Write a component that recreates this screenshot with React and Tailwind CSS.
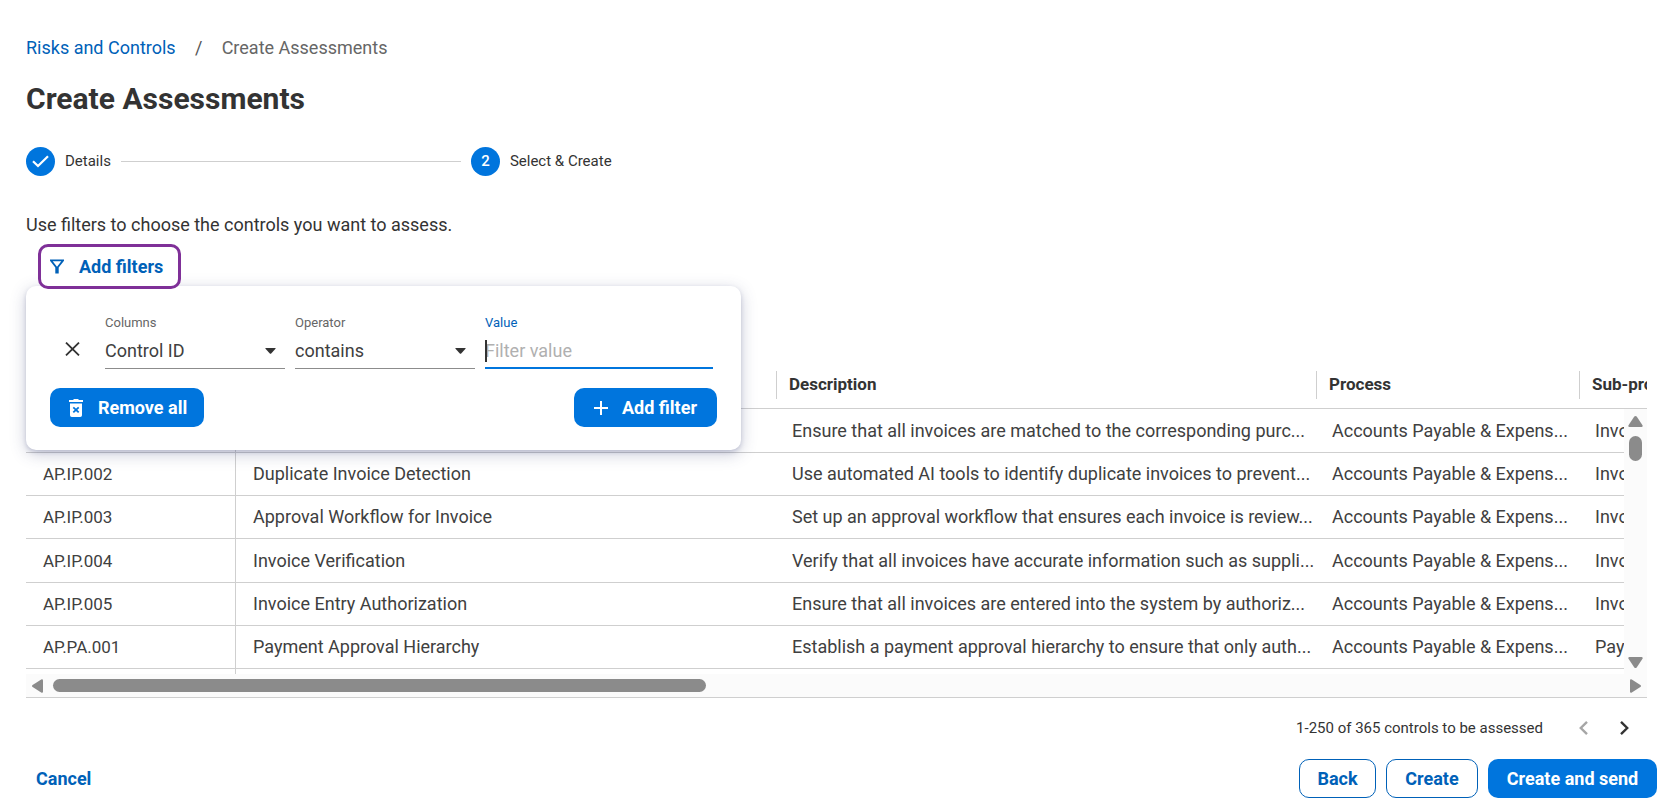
import React from "react";

const BLUE_BUTTON =
  "flex h-[39px] items-center rounded-[10px] bg-[#0075dd] text-[18px] font-bold text-white";
const OUTLINE_BUTTON =
  "h-[39px] rounded-[10px] border border-[#0061b8] bg-white text-[18px] font-bold text-[#0061b8]";

const HEADERS = ["Control ID", "Name", "Description", "Process", "Sub-process"];

const ROWS = [
  ["AP.IP.001", "Invoice Matching", "Ensure that all invoices are matched to the corresponding purc...", "Invoice Processing"],
  ["AP.IP.002", "Duplicate Invoice Detection", "Use automated AI tools to identify duplicate invoices to prevent...", "Invoice Processing"],
  ["AP.IP.003", "Approval Workflow for Invoice", "Set up an approval workflow that ensures each invoice is review...", "Invoice Processing"],
  ["AP.IP.004", "Invoice Verification", "Verify that all invoices have accurate information such as suppli...", "Invoice Processing"],
  ["AP.IP.005", "Invoice Entry Authorization", "Ensure that all invoices are entered into the system by authoriz...", "Invoice Processing"],
  ["AP.PA.001", "Payment Approval Hierarchy", "Establish a payment approval hierarchy to ensure that only auth...", "Payment Approval"],
];

function Breadcrumb() {
  return (
    <nav aria-label="Breadcrumb" className="flex h-6 items-center text-[18px]">
      <a href="#risks" className="text-[#0061b8]">Risks and Controls</a>
      <span className="w-[46px] text-center text-[#555]">/</span>
      <span className="text-[#666]">Create Assessments</span>
    </nav>
  );
}

function Stepper() {
  return (
    <ol className="mt-[30px] flex h-[29px] items-center gap-[10px] text-[15px]">
      <li className="flex items-center gap-[10px]">
        <span className="flex size-[29px] items-center justify-center rounded-full bg-[#0075dd]">
          <svg width="17" height="13" viewBox="0 0 17 13" fill="none" stroke="#fff" strokeWidth="2.2" aria-hidden="true">
            <path d="M1 6.2 6 11 16 1.2" />
          </svg>
        </span>
        Details
      </li>
      <li aria-hidden="true" className="h-px w-[340px] bg-[#cfcfcf]" />
      <li className="flex items-center gap-[10px]">
        <span className="flex size-[29px] items-center justify-center rounded-full bg-[#0075dd] font-medium text-white">
          2
        </span>
        Select &amp; Create
      </li>
    </ol>
  );
}

function SelectField({ id, label, value }) {
  return (
    <div className="w-[180px]">
      <label htmlFor={id} className="block h-5 text-[13px] leading-[22px] text-[#666]">{label}</label>
      <div className="relative">
        <select
          id={id}
          defaultValue={value}
          className="h-[37px] w-full appearance-none border-b border-[#8c8c8c] bg-transparent pt-px text-[18px] text-[#404040] outline-none"
        >
          <option>{value}</option>
        </select>
        <svg className="pointer-events-none absolute top-4 right-[9px]" width="11" height="6" viewBox="0 0 11 6" fill="#333" aria-hidden="true">
          <path d="M.8 0h9.4q.8.1.3.8L6.2 5.5q-.7.6-1.4 0L.5.8Q0 .1.8 0Z" />
        </svg>
      </div>
    </div>
  );
}

function FilterPanel() {
  return (
    <div className="absolute top-[42px] left-0 z-10 h-[164px] w-[715px] rounded-[10px] bg-white pt-[26px] pr-6 pl-6 shadow-[0_4px_16px_rgba(60,70,120,0.28),0_2px_4px_rgba(60,70,120,0.2)]">
      <div className="flex">
        <button type="button" aria-label="Remove filter" className="mt-[30px] ml-[15px] h-[14px] w-[40px]">
          <svg width="15" height="14" viewBox="0 0 15 14" fill="none" stroke="#333" strokeWidth="1.8" aria-hidden="true">
            <path d="m1 .6 13 12.8M14 .6 1 13.4" />
          </svg>
        </button>
        <div className="flex gap-[10px]">
          <SelectField id="columns" label="Columns" value="Control ID" />
          <SelectField id="operator" label="Operator" value="contains" />
          <div className="w-[228px]">
            <label htmlFor="value" className="block h-5 text-[13px] leading-[22px] text-[#0061b8]">Value</label>
            <div className="relative">
              <input
                id="value"
                type="text"
                placeholder="Filter value"
                className="h-[37px] w-full border-b-2 border-[#0075dd] bg-transparent pt-0.5 text-[18px] text-[#404040] outline-none placeholder:text-[#b0b0b0]"
              />
              <span className="absolute top-2 left-0 h-[22px] w-[2px] bg-[#333]" />
            </div>
          </div>
        </div>
      </div>
      <div className="mt-[19px] flex justify-between">
        <button type="button" className={BLUE_BUTTON + " w-[154px] pl-[19px]"}>
          <svg width="14" height="18" viewBox="0 0 14 18" aria-hidden="true">
            <path fill="#fff" d="M0 1h4l1-1h4l1 1h4v2H0ZM1 4.500h12V16.200q0 1.800-1.800 1.800H2.800Q1 18 1 16.200Z" />
            <path fill="none" stroke="#0075dd" strokeWidth="1.800" d="m4.300 8.400 5.400 5M9.700 8.400l-5.400 5" />
          </svg>
          <span className="ml-[15px]">Remove all</span>
        </button>
        <button type="button" className={BLUE_BUTTON + " w-[143px] pl-5"}>
          <svg width="14" height="14" viewBox="0 0 14 14" stroke="#fff" strokeWidth="2" aria-hidden="true">
            <path d="M7 0v14M0 7h14" />
          </svg>
          <span className="ml-[14px]">Add filter</span>
        </button>
      </div>
    </div>
  );
}

function ControlsTable() {
  return (
    <div className="mt-16 border-b border-[#cfcfcf]">
      <div className="relative overflow-hidden">
        <table className="w-full table-fixed border-separate border-spacing-0 text-left whitespace-nowrap">
          <colgroup>
            <col className="w-[210px]" />
            <col className="w-[540px]" />
            <col className="w-[540px]" />
            <col className="w-[263px]" />
            <col />
          </colgroup>
          <thead>
            <tr className="h-14">
              {HEADERS.map((name) => (
                <th key={name} scope="col" className="border-b border-[#cfcfcf] p-0 pt-2">
                  <div className="flex h-7 items-center border-l border-[#cfcfcf] pl-3 text-[17px] font-bold">
                    {name}
                  </div>
                </th>
              ))}
            </tr>
          </thead>
          <tbody className="text-[18px] leading-6 text-[#404040]">
            {ROWS.map(([id, name, description, sub]) => (
              <tr key={id} className="h-[43px] nth-[3n+1]:h-11">
                <td className="border-r border-b border-[#cfcfcf] py-0 pl-[17px] text-[17px]">{id}</td>
                <td className="border-b border-[#cfcfcf] py-0 pl-[17px]">{name}</td>
                <td className="border-b border-[#cfcfcf] py-0 pl-4">{description}</td>
                <td className="border-b border-[#cfcfcf] py-0 pl-4">Accounts Payable &amp; Expens...</td>
                <td className="border-b border-[#cfcfcf] py-0 pl-4">{sub}</td>
              </tr>
            ))}
            <tr className="h-[5px]" aria-hidden="true">
              <td className="border-r border-[#cfcfcf] p-0" />
              <td colSpan={4} className="p-0" />
            </tr>
          </tbody>
        </table>
        <div className="absolute top-14 right-0 bottom-0 flex w-[23px] flex-col items-center bg-[#fbfbfb] pt-[7px]">
          <svg width="15" height="11" viewBox="0 0 15 11" fill="#8b8b8b" aria-hidden="true">
            <path d="M6.300.6q1.200-1.200 2.400 0l5.800 8.600q.6 1.700-.9 1.800H1.400Q-.1 10.900.5 9.200Z" />
          </svg>
          <div className="mt-[9px] h-[25px] w-[13px] rounded-full bg-[#8b8b8b]" />
          <svg className="mt-auto mb-[6px]" width="15" height="11" viewBox="0 0 15 11" fill="#8b8b8b" aria-hidden="true">
            <path d="M6.300 10.400q1.200 1.200 2.400 0l5.800-8.600Q15.100.1 13.600 0H1.400Q-.1.1.5 1.800Z" />
          </svg>
        </div>
      </div>
      <div className="flex h-[23px] items-center bg-[#fbfbfb] pr-[6px] pl-[6px]">
        <svg width="11" height="14" viewBox="0 0 11 14" fill="#8b8b8b" aria-hidden="true">
          <path d="M.6 5.900q-1.200 1.100 0 2.200l8.600 5.500q1.700.6 1.800-.9V1.300Q10.900-.2 9.200.4Z" />
        </svg>
        <div className="mx-[10px] flex-1">
          <div className="h-[13px] w-[653px] rounded-full bg-[#8b8b8b]" />
        </div>
        <svg width="11" height="14" viewBox="0 0 11 14" fill="#8b8b8b" aria-hidden="true">
          <path d="M10.400 5.900q1.200 1.100 0 2.200l-8.600 5.500q-1.700.6-1.800-.9V1.300Q.1-.2 1.800.4Z" />
        </svg>
      </div>
    </div>
  );
}

export default function App() {
  return (
    <main className="bg-white pt-[35px] font-['Roboto',sans-serif] text-[#333]">
      <div className="pr-[19px] pl-[26px]">
        <Breadcrumb />
        <h1 className="mt-[22px] h-9 text-[30px] leading-9 font-bold">Create Assessments</h1>
        <Stepper />
        <p className="mt-[37px] h-6 text-[18px] leading-6">Use filters to choose the controls you want to assess.</p>
        <div className="relative mt-[7px]">
          <button
            type="button"
            className="relative z-20 ml-3 flex h-[45px] w-[143px] items-center rounded-[10px] border-[3px] border-[#7f3098] bg-white pl-[9px] text-[18px] font-bold text-[#0061b8]"
          >
            <svg width="14" height="15" viewBox="0 0 14 15" aria-hidden="true">
              <path fill="#0061b8" fillRule="evenodd" d="M0 .5h14v1.300L8.700 8.600v5.900H5.300V8.600L0 1.800ZM2.700 2.200 7 7.700l4.300-5.500Z" />
            </svg>
            <span className="ml-[15px]">Add filters</span>
          </button>
          <FilterPanel />
        </div>
        <ControlsTable />
        <div className="mt-[18px] flex h-6 items-center justify-end pr-[18px] text-[15px]">
          <span>1-250 of 365 controls to be assessed</span>
          <button type="button" disabled aria-label="Previous page" className="ml-[36px]">
            <svg width="9" height="14" viewBox="0 0 9 14" fill="none" stroke="#a6a6a6" strokeWidth="2.400" aria-hidden="true">
              <path d="M8 .9 1.800 7 8 13.100" />
            </svg>
          </button>
          <button type="button" aria-label="Next page" className="ml-8">
            <svg width="9" height="14" viewBox="0 0 9 14" fill="none" stroke="#333" strokeWidth="2.400" aria-hidden="true">
              <path d="M1 .9 7.200 7 1 13.100" />
            </svg>
          </button>
        </div>
      </div>
      <footer className="mt-[19px] flex items-center pr-[9px] pb-3 pl-9">
        <button type="button" className="text-[18px] font-bold text-[#0061b8]">Cancel</button>
        <div className="ml-auto flex gap-[10px]">
          <button type="button" className={OUTLINE_BUTTON + " w-[77px]"}>Back</button>
          <button type="button" className={OUTLINE_BUTTON + " w-[92px]"}>Create</button>
          <button type="button" className={BLUE_BUTTON + " w-[169px] justify-center"}>Create and send</button>
        </div>
      </footer>
    </main>
  );
}
